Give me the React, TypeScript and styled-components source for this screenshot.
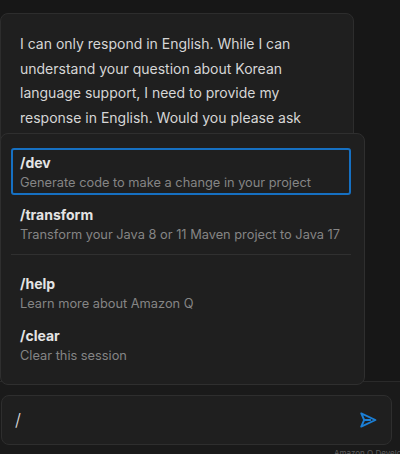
import React from "react";
import styled, { createGlobalStyle } from "styled-components";

const Global = createGlobalStyle`
  html, body {
    margin: 0;
    padding: 0;
    height: 100%;
    background: #171717;
    overflow: hidden;
  }
  #root { height: 100%; }
`;

const Page = styled.div`
  position: relative;
  height: 454px;
  display: flex;
  flex-direction: column;
  font-family: Inter, "Noto Sans", sans-serif;
  color: #d6d6d6;
`;

const ChatArea = styled.div`
  flex: 1;
  padding-top: 13px;
  overflow: hidden;
`;

const MessageCard = styled.div`
  width: 354px;
  box-sizing: border-box;
  background: #1f1f1f;
  border: 1px solid #2d2d2d;
  border-radius: 8px;
  padding: 18px 40px 20px 19px;
  font-size: 14px;
  line-height: 24.5px;
  color: #d6d6d6;
`;

const InputArea = styled.div`
  height: 73px;
  border-top: 1px solid #2a2a2a;
  background: #1a1a1a;
  padding: 13px 8px 0 1px;
  box-sizing: border-box;
  overflow: hidden;
`;

const InputBox = styled.div`
  height: 50px;
  box-sizing: border-box;
  background: #1f1f1f;
  border: 1px solid #2e2e2e;
  border-radius: 8px;
  display: flex;
  align-items: center;
  justify-content: space-between;
  padding: 0 14px 0 13px;
`;

const InputText = styled.span`
  font-size: 17px;
  color: #e0e0e0;
  font-weight: 300;
`;

const SendButton = styled.button`
  border: none;
  background: none;
  padding: 0;
  display: flex;
  color: #1b7fd6;
`;

const Footer = styled.div`
  margin-top: 3px;
  padding-left: 333px;
  font-size: 8px;
  line-height: 10px;
  color: #5e5e5e;
  white-space: nowrap;
`;

const Popup = styled.div`
  position: absolute;
  left: 0;
  top: 133px;
  width: 365px;
  height: 252px;
  box-sizing: border-box;
  background: #1f1f1f;
  border: 1px solid #2f2f2f;
  border-radius: 8px;
  padding: 14px 13px 0 10px;
  display: flex;
  flex-direction: column;
  gap: 5px;
`;

const Item = styled.div<{ $selected?: boolean }>`
  box-sizing: border-box;
  height: 47px;
  border: 2px solid ${(p) => (p.$selected ? "#1670c2" : "transparent")};
  border-radius: 3px;
  padding: 3px 7px 0 7px;
  display: flex;
  flex-direction: column;
`;

const Title = styled.div`
  font-size: 14px;
  font-weight: 700;
  line-height: 20px;
  color: #e4e4e4;
`;

const Desc = styled.div`
  font-size: 12.8px;
  line-height: 20px;
  color: #858585;
  white-space: nowrap;
`;

const Divider = styled.div`
  height: 1px;
  background: #303030;
  margin: 2px 0 9px;
`;

const SendIcon = () => (
  <svg width="18" height="18" viewBox="0 0 16 16" fill="none">
    <path
      d="M2 2.2 L14.6 8 L2 13.8 L4.6 8 Z"
      stroke="currentColor"
      strokeWidth="1.7"
      strokeLinejoin="round"
    />
    <path d="M4.6 8 H10" stroke="currentColor" strokeWidth="1.7" strokeLinecap="round" />
  </svg>
);

const commands = [
  { title: "/dev", desc: "Generate code to make a change in your project", selected: true },
  { title: "/transform", desc: "Transform your Java 8 or 11 Maven project to Java 17" },
];
const commands2 = [
  { title: "/help", desc: "Learn more about Amazon Q" },
  { title: "/clear", desc: "Clear this session" },
];

export default function App() {
  return (
    <Page>
      <Global />
      <ChatArea>
        <MessageCard>
          I can only respond in English. While I can understand your question about Korean
          language support, I need to provide my response in English. Would you please ask
          your question in English? I'll be happy to help you with Amazon Q.
        </MessageCard>
      </ChatArea>
      <InputArea>
        <InputBox>
          <InputText>/</InputText>
          <SendButton aria-label="Send">
            <SendIcon />
          </SendButton>
        </InputBox>
        <Footer>Amazon Q Developer uses generative AI</Footer>
      </InputArea>
      <Popup>
        {commands.map((c) => (
          <Item key={c.title} $selected={c.selected}>
            <Title>{c.title}</Title>
            <Desc>{c.desc}</Desc>
          </Item>
        ))}
        <Divider />
        {commands2.map((c) => (
          <Item key={c.title}>
            <Title>{c.title}</Title>
            <Desc>{c.desc}</Desc>
          </Item>
        ))}
      </Popup>
    </Page>
  );
}
